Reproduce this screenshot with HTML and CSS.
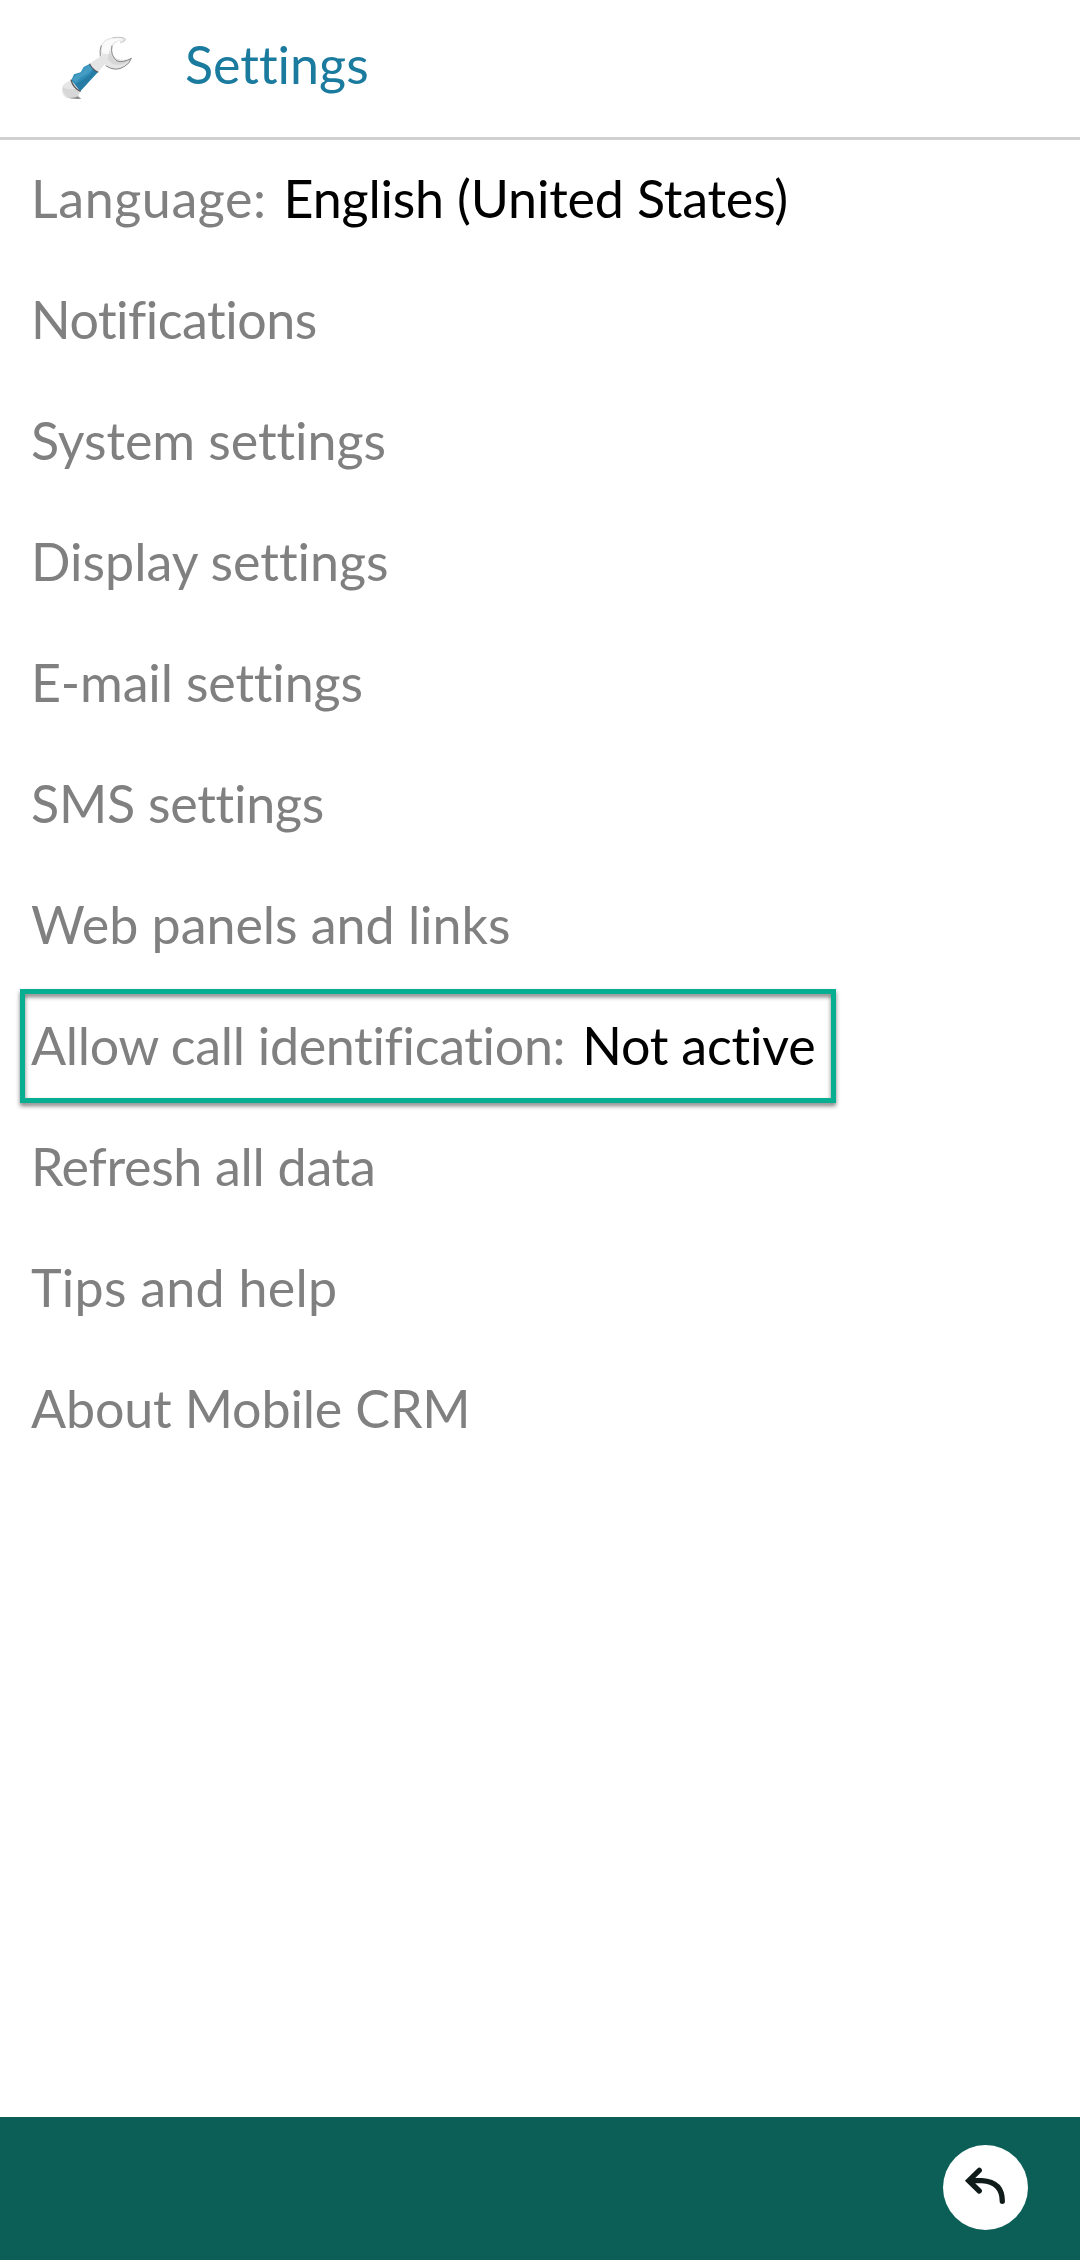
FILE: index.html
```html
<!DOCTYPE html>
<html lang="en">
<head>
<meta charset="utf-8">
<title>Settings</title>
<link rel="stylesheet" href="styles.css">
</head>
<body>
<div class="screen">
<header class="header">
<svg class="wrench" viewBox="60 48 216 192" aria-hidden="true">
<path fill="#e6e6e6" d="M66 211Q65 195 80 187L94 179 122 212 116 225 120 235 80 235Q66 225 66 211Z"/>
<path fill="#d7d7d7" d="M68 202Q88 213 113 204L122 212 113 227 118 234 86 233Q69 225 68 202Z"/>
<path fill="#8f8f8f" d="M77 231Q99 237 113 229L124 236Q100 239 77 231Z"/>
<path fill="#2f8fb9" d="M94 181L102 163 122 157 131 141 150 131 175 155 121 214Z"/>
<path fill="#459cc2" d="M96 179L106 166 123 160 132 145 147 136 160 145 145 160 123 171 108 186Z"/>
<path fill="#267ca4" d="M105 193L126 181 148 164 160 149 172 156 121 212Z"/>
<path fill="none" stroke="#55575c" stroke-width="4" d="M93 179Q99 205 122 214M149 131Q159 151 175 156"/>
<path fill="#e5e5e5" d="M150 130L185 107Q177 77 193 62Q212 49 244 53Q260 58 255 64Q235 58 220 75Q211 90 220 107Q235 126 276 115Q260 147 226 148Q207 148 195 132L175 155Q158 149 150 130Z"/>
<path fill="#fafafa" d="M188 101Q180 78 197 63Q216 52 244 56L248 61Q222 58 213 80L211 102Z"/>
<path fill="#d6d6d6" d="M212 77Q205 103 226 121Q244 130 272 118Q248 141 218 132L203 119Z"/>
<path fill="none" stroke="#858585" stroke-width="3" d="M181 109Q178 91 184 76M216 77Q210 106 231 123M197 137Q226 157 254 139Q269 130 274 115Q250 129 231 123"/>
<path fill="none" stroke="#c4c4c4" stroke-width="3" d="M218 53Q249 49 257 58Q254 68 240 67"/>
</svg>
<h1 class="title">Settings</h1>
</header>
<ul class="list">
<li class="row"><span class="language">Language:</span><span class="value locale">English (United States)</span></li>
<li class="row"><span class="notifications">Notifications</span></li>
<li class="row"><span class="system">System settings</span></li>
<li class="row"><span>Display settings</span></li>
<li class="row"><span class="email">E-mail settings</span></li>
<li class="row"><span class="sms">SMS settings</span></li>
<li class="row"><span class="web">Web panels and links</span></li>
<li class="row highlighted"><span class="call">Allow call identification:</span><span class="value status">Not active</span></li>
<li class="row"><span class="refresh">Refresh all data</span></li>
<li class="row"><span class="tips">Tips and help</span></li>
<li class="row"><span class="about">About Mobile CRM</span></li>
</ul>
<footer class="footer">
<button class="back" aria-label="Back"><svg viewBox="0 0 85 85" aria-hidden="true"><path d="M36.3 25.3L25.7 35.7 36.3 46M26 35.7H39Q59.3 37 59.3 56.3"/></svg></button>
</footer>
</div>
</body>
</html>
```
FILE: styles.css
```css
*, *::after { box-sizing: border-box; }
body { margin: 0; background: #fff; font-family: Lato, sans-serif; font-variant-ligatures: none; }
.screen { display: flex; flex-direction: column; height: 2260px; }
.header { display: flex; height: 140px; padding: 36px 60px 0; border-bottom: 3px solid #d0d0d0; }
.wrench { width: 72px; height: 64px; }
.title { margin: -3px 0 0 53px; font-size: 52px; font-weight: 400; line-height: 62px; color: #1b7b9f; }
.list { flex: 1; margin: 0; padding: 0; list-style: none; }
.row { position: relative; display: flex; align-items: center; gap: 17px; height: 121px; padding: 0 0 6px 31px; font-size: 52px; color: #808080; white-space: nowrap; }
.value { color: #000; }
.language { letter-spacing: .56px; }
.locale { letter-spacing: -.18px; }
.notifications { letter-spacing: -.5px; }
.system { letter-spacing: -.07px; }
.email { letter-spacing: -.16px; }
.sms { letter-spacing: -.27px; }
.web { letter-spacing: -.05px; }
.call { letter-spacing: -.33px; }
.status { letter-spacing: -.2px; }
.refresh { letter-spacing: -.3px; }
.tips { letter-spacing: .25px; }
.about { letter-spacing: -.15px; }
.highlighted::after { content: ""; position: absolute; left: 20px; top: 2px; width: 816px; height: 114px; border: 5px solid #08ae91; filter: drop-shadow(0 3px 2px rgba(0, 0, 0, .5)); }
.footer { display: flex; justify-content: flex-end; height: 143px; padding: 28px 52px 0; background: #0b5f57; }
.back { width: 85px; height: 85px; padding: 0; border: 0; border-radius: 50%; background: #fff; }
.back svg { display: block; fill: none; stroke: #101c1a; stroke-width: 5.3; stroke-linecap: round; }
```
